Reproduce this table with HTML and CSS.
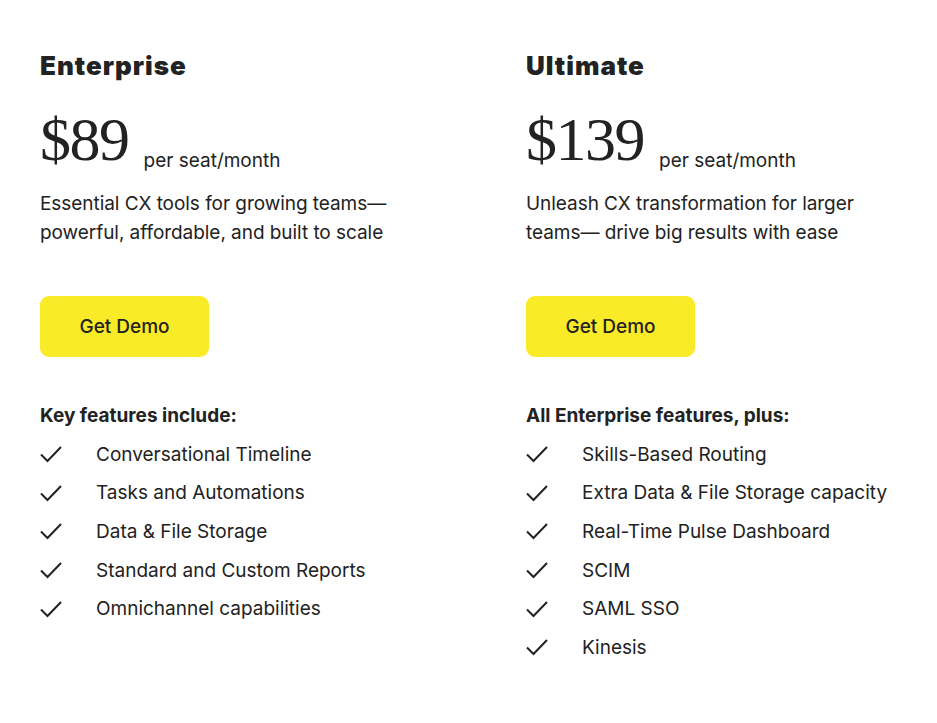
FILE: index.html
```html
<!DOCTYPE html>
<html>
<head>
<meta charset="utf-8">
<link rel="stylesheet" href="styles.css">
</head>
<body>
<div class="plans">
  <section class="plan">
    <h2 class="name">Enterprise</h2>
    <div class="price"><span class="amount">$89</span><span class="per">per seat/month</span></div>
    <p class="desc">Essential CX tools for growing teams—<br>powerful, affordable, and built to scale</p>
    <a class="btn">Get Demo</a>
    <h3 class="feat-title">Key features include:</h3>
    <ul class="features">
      <li><svg class="check" viewBox="0 0 22 18"><path d="M1 9.5 L7.5 16 L21 2"/></svg><span>Conversational Timeline</span></li>
      <li><svg class="check" viewBox="0 0 22 18"><path d="M1 9.5 L7.5 16 L21 2"/></svg><span>Tasks and Automations</span></li>
      <li><svg class="check" viewBox="0 0 22 18"><path d="M1 9.5 L7.5 16 L21 2"/></svg><span>Data &amp; File Storage</span></li>
      <li><svg class="check" viewBox="0 0 22 18"><path d="M1 9.5 L7.5 16 L21 2"/></svg><span>Standard and Custom Reports</span></li>
      <li><svg class="check" viewBox="0 0 22 18"><path d="M1 9.5 L7.5 16 L21 2"/></svg><span>Omnichannel capabilities</span></li>
    </ul>
  </section>
  <section class="plan">
    <h2 class="name">Ultimate</h2>
    <div class="price"><span class="amount">$139</span><span class="per">per seat/month</span></div>
    <p class="desc">Unleash CX transformation for larger<br>teams— drive big results with ease</p>
    <a class="btn">Get Demo</a>
    <h3 class="feat-title">All Enterprise features, plus:</h3>
    <ul class="features">
      <li><svg class="check" viewBox="0 0 22 18"><path d="M1 9.5 L7.5 16 L21 2"/></svg><span>Skills-Based Routing</span></li>
      <li><svg class="check" viewBox="0 0 22 18"><path d="M1 9.5 L7.5 16 L21 2"/></svg><span>Extra Data &amp; File Storage capacity</span></li>
      <li><svg class="check" viewBox="0 0 22 18"><path d="M1 9.5 L7.5 16 L21 2"/></svg><span>Real-Time Pulse Dashboard</span></li>
      <li><svg class="check" viewBox="0 0 22 18"><path d="M1 9.5 L7.5 16 L21 2"/></svg><span>SCIM</span></li>
      <li><svg class="check" viewBox="0 0 22 18"><path d="M1 9.5 L7.5 16 L21 2"/></svg><span>SAML SSO</span></li>
      <li><svg class="check" viewBox="0 0 22 18"><path d="M1 9.5 L7.5 16 L21 2"/></svg><span>Kinesis</span></li>
    </ul>
  </section>
</div>
</body>
</html>
```
FILE: styles.css
```css
* { box-sizing: border-box; }
html, body { margin: 0; background: #fff; }
body {
  font-family: Inter, "Liberation Sans", sans-serif;
  color: #222222;
  padding: 50px 40px 0 40px;
}
.plans {
  display: grid;
  grid-template-columns: 486px 1fr;
}
.plan { display: flex; flex-direction: column; align-items: flex-start; }
.name {
  margin: 0;
  font-size: 26px;
  font-weight: 900;
  line-height: 32px;
  letter-spacing: 1px;
}
.price {
  margin-top: 29px;
  height: 56px;
  line-height: 56px;
  white-space: nowrap;
}
.amount {
  font-family: "Liberation Serif", "DejaVu Serif", serif;
  font-size: 62px;
  letter-spacing: -1.5px;
}
.per {
  font-size: 19px;
  line-height: 0;
  margin-left: 15px;
  vertical-align: -7px;
}
.desc {
  margin: 22px 0 0 0;
  font-size: 19px;
  line-height: 29px;
  letter-spacing: -0.05px;
}
.btn {
  margin-top: 49px;
  display: flex;
  align-items: center;
  justify-content: center;
  width: 169px;
  height: 61px;
  background: #faeb28;
  border-radius: 9px;
  font-size: 19px;
  font-weight: 500;
}
.feat-title {
  margin: 47px 0 0 0;
  font-size: 19px;
  font-weight: 700;
  line-height: 24px;
}
.features {
  list-style: none;
  margin: 7px 0 0 0;
  padding: 0;
}
.features li {
  display: flex;
  align-items: center;
  height: 38.6px;
  font-size: 19px;
}
.check {
  width: 22px;
  height: 18px;
  margin-right: 34px;
  fill: none;
  stroke: #222;
  stroke-width: 2;
}
```
